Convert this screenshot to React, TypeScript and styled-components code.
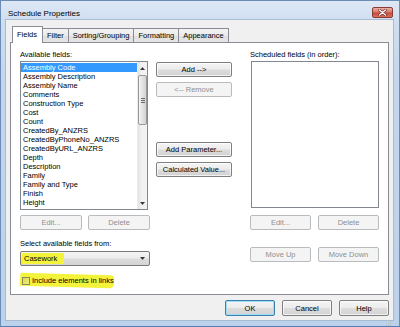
import React from "react";
import styled, { createGlobalStyle, css } from "styled-components";

const Global = createGlobalStyle`
  html, body { margin: 0; padding: 0; background: #ffffff; }
  body { font-family: "Liberation Sans", Arial, sans-serif; }
  * { box-sizing: border-box; }
`;

const Window = styled.div`
  width: 400px;
  height: 327px;
  display: flex;
  flex-direction: column;
  border: 1px solid #6a8cb6;
  border-bottom-color: #4f7fb8;
  background: linear-gradient(to bottom, #dde8f5 0px, #cfdef0 20px, #c3d6ed 80px, #bcd1ea 100%);
  padding: 0 6px 6px 5px;
`;

const TitleBar = styled.div`
  height: 19px;
  display: flex;
  align-items: flex-start;
  justify-content: space-between;
`;

const Title = styled.div`
  font-size: 8px;
  line-height: 10px;
  padding: 8px 0 0 2px;
  color: #000;
`;

const CloseButton = styled.div`
  width: 21px;
  height: 11px;
  margin-top: 6px;
  border: 1px solid #8b3b33;
  border-radius: 2px;
  background: linear-gradient(to bottom, #eab0a4 0%, #d9786a 45%, #c74a3a 55%, #d9705c 100%);
  display: flex;
  align-items: center;
  justify-content: center;
`;

const Client = styled.div`
  position: relative;
  flex: 1;
  display: flex;
  flex-direction: column;
  background: #f0f0f0;
  box-shadow: 0 0 0 1px #a7bbd3;
  padding: 6px 4px 4px 4px;
`;

const TabRow = styled.div`
  display: flex;
  align-items: flex-end;
  height: 17px;
  margin-bottom: -1px;
  padding-left: 2px;
  position: relative;
  z-index: 1;
`;

const Tab = styled.div<{ $active?: boolean }>`
  font-size: 7.5px;
  line-height: 13px;
  height: 14px;
  padding: 0 4px;
  margin-bottom: 1px;
  margin-left: -1px;
  border: 1px solid #898c95;
  border-bottom: none;
  background: linear-gradient(to bottom, #f3f3f3 0%, #ebebeb 50%, #dedede 51%, #e5e5e5 100%);
  color: #000;
  ${(p) =>
    p.$active &&
    css`
      height: 17px;
      margin-bottom: 0;
      margin-left: 0;
      padding: 1px 5px 0 4px;
      background: #ffffff;
      line-height: 13px;
    `}
`;

const Panel = styled.div`
  flex: 1;
  display: flex;
  border: 1px solid #898c95;
  background: #ffffff;
  padding: 5px 9px 0 9px;
`;

const Column = styled.div<{ $width: number; $gap?: number }>`
  width: ${(p) => p.$width}px;
  margin-right: ${(p) => p.$gap ?? 0}px;
  display: flex;
  flex-direction: column;
`;

const Label = styled.div<{ $top?: number }>`
  font-size: 7.5px;
  line-height: 13px;
  height: 13px;
  margin-top: ${(p) => p.$top ?? 0}px;
  color: #000;
  white-space: nowrap;
`;

const ListBox = styled.div<{ $height: number; $indent?: number }>`
  height: ${(p) => p.$height}px;
  width: 128px;
  margin-left: ${(p) => p.$indent ?? 0}px;
  border: 1px solid #828790;
  background: #ffffff;
  display: flex;
`;

const Items = styled.div`
  flex: 1;
  padding-top: 1px;
  overflow: hidden;
`;

const Item = styled.div<{ $selected?: boolean }>`
  font-size: 7.5px;
  height: 9px;
  line-height: 9px;
  padding-left: 2px;
  white-space: nowrap;
  color: ${(p) => (p.$selected ? "#ffffff" : "#000000")};
  background: ${(p) => (p.$selected ? "#3399ff" : "transparent")};
`;

const ScrollBar = styled.div`
  width: 10px;
  display: flex;
  flex-direction: column;
  background: linear-gradient(to right, #e3e3e3, #f2f2f2 40%, #f2f2f2);
  border-left: 1px solid #ececec;
`;

const Arrow = styled.div`
  height: 12px;
  display: flex;
  align-items: center;
  justify-content: center;
`;

const Track = styled.div`
  flex: 1;
  padding-top: 1px;
`;

const Thumb = styled.div`
  height: 50px;
  width: 9px;
  border: 1px solid #989898;
  border-radius: 2px;
  background: linear-gradient(to right, #f4f4f4, #e2e2e2 50%, #d2d2d2);
  display: flex;
  align-items: center;
  justify-content: center;
`;

const Grip = styled.div`
  width: 4px;
  height: 5px;
  background: repeating-linear-gradient(to bottom, #6a6a6a 0px, #6a6a6a 1px, transparent 1px, transparent 2px);
`;

const ButtonRow = styled.div<{ $top: number }>`
  display: flex;
  justify-content: space-between;
  margin-top: ${(p) => p.$top}px;
`;

const Button = styled.div<{ $width?: number; $height?: number; $top?: number; $disabled?: boolean; $default?: boolean }>`
  width: ${(p) => p.$width ?? 76}px;
  height: ${(p) => p.$height ?? 15}px;
  margin-top: ${(p) => p.$top ?? 0}px;
  font-size: 7.5px;
  display: flex;
  align-items: center;
  justify-content: center;
  border: 1px solid #7f7f7f;
  border-radius: 2px;
  color: #000;
  white-space: nowrap;
  background: linear-gradient(to bottom, #f4f4f4 0%, #ececec 48%, #dddddd 52%, #d2d2d2 100%);
  box-shadow: inset 0 0 0 1px rgba(255, 255, 255, 0.7);
  ${(p) =>
    p.$disabled &&
    css`
      border-color: #b8bcbf;
      color: #8f8f8f;
      background: #f4f4f4;
      box-shadow: none;
    `}
  ${(p) =>
    p.$default &&
    css`
      border-color: #3c7fb1;
      box-shadow: inset 0 0 0 1px #9fdcf6;
    `}
`;

const Select = styled.div`
  margin-top: 1px;
  height: 15px;
  width: 130px;
  border: 1px solid #7a7a7a;
  border-radius: 2px;
  background: linear-gradient(to bottom, #f4f4f4 0%, #ececec 48%, #dddddd 52%, #d4d4d4 100%);
  display: flex;
  align-items: center;
  justify-content: space-between;
  padding: 0 4px 0 1px;
`;

const Marker = styled.span`
  font-size: 7.5px;
  line-height: 11px;
  height: 11px;
  padding: 0 7px 0 2px;
  background: #f4f33c;
  color: #000;
`;

const CheckRow = styled.div`
  margin-top: 8px;
  width: 94px;
  height: 13px;
  display: flex;
  align-items: center;
  padding-left: 2px;
  position: relative;
  &::before {
    content: "";
    position: absolute;
    left: 0;
    right: 0;
    top: 0;
    bottom: 0;
    background: #f4f33c;
    transform: rotate(1.6deg) skewX(-4deg);
    border-radius: 1px 4px 4px 1px;
  }
`;

const CheckBox = styled.div`
  position: relative;
  width: 8px;
  height: 8px;
  border: 1px solid #8a8a5a;
  background: linear-gradient(135deg, #d9d84a, #f2f17a);
  margin-right: 2px;
`;

const CheckText = styled.span`
  position: relative;
  font-size: 7.5px;
  white-space: nowrap;
  color: #000;
`;

const Footer = styled.div`
  display: flex;
  justify-content: flex-end;
  gap: 7px;
  margin-top: 5px;
`;

const SizeGrip = styled.div`
  position: absolute;
  right: 1px;
  bottom: 1px;
  width: 6px;
  height: 6px;
`;

const fields = [
  "Assembly Code",
  "Assembly Description",
  "Assembly Name",
  "Comments",
  "Construction Type",
  "Cost",
  "Count",
  "CreatedBy_ANZRS",
  "CreatedByPhoneNo_ANZRS",
  "CreatedByURL_ANZRS",
  "Depth",
  "Description",
  "Family",
  "Family and Type",
  "Finish",
  "Height",
];

const Tri = ({ down }: { down?: boolean }) => (
  <svg width="5" height="3" viewBox="0 0 5 3">
    <path d={down ? "M0 0 L5 0 L2.5 3 Z" : "M0 3 L5 3 L2.5 0 Z"} fill="#3a3a3a" />
  </svg>
);

export default function App() {
  return (
    <>
      <Global />
      <Window>
        <TitleBar>
          <Title>Schedule Properties</Title>
          <CloseButton>
            <svg width="9" height="7" viewBox="0 0 9 7">
              <path d="M1.5 1 L7.5 6 M7.5 1 L1.5 6" stroke="#6b2a24" strokeWidth="2.6" strokeLinecap="round" />
              <path d="M1.5 1 L7.5 6 M7.5 1 L1.5 6" stroke="#ffffff" strokeWidth="1.4" strokeLinecap="round" />
            </svg>
          </CloseButton>
        </TitleBar>
        <Client>
          <TabRow>
            <Tab $active>Fields</Tab>
            <Tab>Filter</Tab>
            <Tab>Sorting/Grouping</Tab>
            <Tab>Formatting</Tab>
            <Tab>Appearance</Tab>
          </TabRow>
          <Panel>
            <Column $width={130} $gap={6}>
              <Label>Available fields:</Label>
              <ListBox $height={149}>
                <Items>
                  {fields.map((f, i) => (
                    <Item key={f} $selected={i === 0}>
                      {f}
                    </Item>
                  ))}
                </Items>
                <ScrollBar>
                  <Arrow>
                    <Tri />
                  </Arrow>
                  <Track>
                    <Thumb>
                      <Grip />
                    </Thumb>
                  </Track>
                  <Arrow>
                    <Tri down />
                  </Arrow>
                </ScrollBar>
              </ListBox>
              <ButtonRow $top={5}>
                <Button $width={62} $disabled>
                  Edit...
                </Button>
                <Button $width={62} $disabled>
                  Delete
                </Button>
              </ButtonRow>
              <Label $top={7}>Select available fields from:</Label>
              <Select>
                <Marker>Casework</Marker>
                <Tri down />
              </Select>
              <CheckRow>
                <CheckBox />
                <CheckText>Include elements in links</CheckText>
              </CheckRow>
            </Column>
            <Column $width={76} $gap={18}>
              <Button $top={14}>Add --&gt;</Button>
              <Button $top={5} $disabled>
                &lt;-- Remove
              </Button>
              <Button $top={45}>Add Parameter...</Button>
              <Button $top={5}>Calculated Value...</Button>
            </Column>
            <Column $width={129}>
              <Label>Scheduled fields (in order):</Label>
              <ListBox $height={147} $indent={1} />
              <ButtonRow $top={7}>
                <Button $width={61} $disabled>
                  Edit...
                </Button>
                <Button $width={61} $disabled>
                  Delete
                </Button>
              </ButtonRow>
              <ButtonRow $top={17}>
                <Button $width={61} $disabled>
                  Move Up
                </Button>
                <Button $width={61} $disabled>
                  Move Down
                </Button>
              </ButtonRow>
            </Column>
          </Panel>
          <Footer>
            <Button $width={50} $height={16} $default>
              OK
            </Button>
            <Button $width={50} $height={16}>
              Cancel
            </Button>
            <Button $width={50} $height={16}>
              Help
            </Button>
          </Footer>
          <SizeGrip>
            <svg width="6" height="6" viewBox="0 0 6 6">
              <rect x="4" y="0" width="1" height="1" fill="#b8b8b8" />
              <rect x="2" y="2" width="1" height="1" fill="#b8b8b8" />
              <rect x="4" y="2" width="1" height="1" fill="#b8b8b8" />
              <rect x="0" y="4" width="1" height="1" fill="#b8b8b8" />
              <rect x="2" y="4" width="1" height="1" fill="#b8b8b8" />
              <rect x="4" y="4" width="1" height="1" fill="#b8b8b8" />
            </svg>
          </SizeGrip>
        </Client>
      </Window>
    </>
  );
}
